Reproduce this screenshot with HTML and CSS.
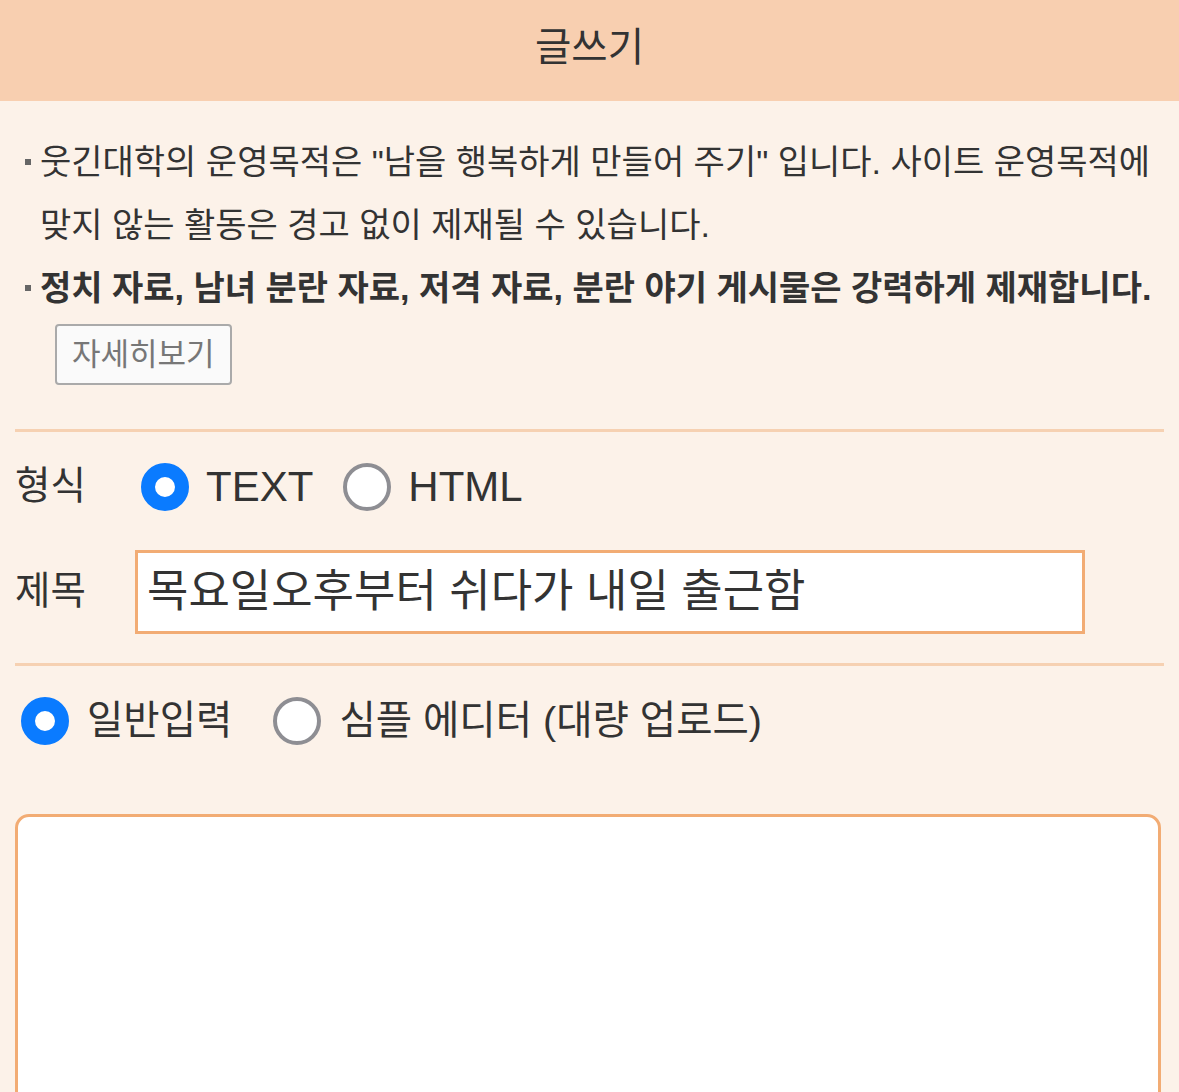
FILE: index.html
```html
<!DOCTYPE html>
<html lang="ko">
<head>
<meta charset="utf-8">
<title>글쓰기</title>
<link rel="stylesheet" href="styles.css">
</head>
<body>
<header class="top">
  <h1 class="top-title">글쓰기</h1>
</header>
<main class="wrap">
  <ul class="notice">
    <li class="notice-item">웃긴대학의 운영목적은 "남을 행복하게 만들어 주기" 입니다. 사이트 운영목적에 맞지 않는 활동은 경고 없이 제재될 수 있습니다.</li>
    <li class="notice-item notice-strong"><strong>정치 자료, 남녀 분란 자료, 저격 자료, 분란 야기 게시물은 강력하게 제재합니다.</strong> <button class="more-btn" type="button">자세히보기</button></li>
  </ul>
  <div class="sep sep-first"></div>
  <div class="row row-format">
    <span class="row-label">형식</span>
    <label class="opt opt-format"><span class="radio radio-on"></span><span class="opt-text latin">TEXT</span></label>
    <label class="opt opt-format"><span class="radio"></span><span class="opt-text latin">HTML</span></label>
  </div>
  <div class="row row-title">
    <span class="row-label">제목</span>
    <div class="title-input">목요일오후부터 쉬다가 내일 출근함</div>
  </div>
  <div class="sep sep-second"></div>
  <div class="row row-mode">
    <label class="opt opt-mode"><span class="radio radio-on"></span><span class="opt-text">일반입력</span></label>
    <label class="opt opt-mode"><span class="radio"></span><span class="opt-text">심플 에디터 (대량 업로드)</span></label>
  </div>
  <div class="editor"></div>
</main>
</body>
</html>
```
FILE: styles.css
```css
html, body {
  margin: 0;
  padding: 0;
}
body {
  background: #fcf2e9;
  color: #333333;
  font-family: "Liberation Sans", "Noto Sans CJK KR", sans-serif;
  overflow: hidden;
}
.top {
  background: #f8cfb0;
  height: 101px;
  display: flex;
  align-items: center;
  justify-content: center;
}
.top-title {
  margin: 0;
  font-size: 39.5px;
  font-weight: 400;
  color: #333;
  line-height: 1;
  padding-bottom: 6px;
}
.wrap {
  padding: 30px 15px 0 15px;
}
.notice {
  list-style: none;
  margin: 0;
  padding: 0;
}
.notice-item {
  position: relative;
  padding-left: 25px;
  font-size: 34px;
  line-height: 63px;
  word-break: keep-all;
}
.notice-item::before {
  content: "";
  position: absolute;
  left: 10px;
  top: 28px;
  width: 6px;
  height: 6px;
  background: #666;
}
.notice-strong strong {
  font-weight: 700;
}
.more-btn {
  display: inline-block;
  vertical-align: middle;
  margin-left: 15px;
  height: 61px;
  padding: 0 15px;
  border: 2px solid #aaaaaa;
  border-radius: 4px;
  background: #fafafa;
  color: #777777;
  font-family: "Liberation Sans", "Noto Sans CJK KR", sans-serif;
  font-size: 31px;
  line-height: 57px;
}
.sep {
  height: 3px;
  background: #f6d1b2;
}
.sep-first {
  margin-top: 44px;
}
.sep-second {
  margin-top: 29px;
}
.row {
  display: flex;
  align-items: center;
}
.row-format {
  margin-top: 25px;
  height: 60px;
}
.row-title {
  margin-top: 33px;
}
.row-label {
  width: 120px;
  flex: none;
  font-size: 38.5px;
  line-height: 1;
}
.opt {
  display: flex;
  align-items: center;
}
.opt-format {
  margin-left: 6px;
  margin-right: 24px;
}
.opt-format .opt-text {
  font-size: 42px;
  margin-left: 17px;
  line-height: 1;
}
.radio {
  width: 48px;
  height: 48px;
  border-radius: 50%;
  box-sizing: border-box;
  background: #ffffff;
  border: 4px solid #8e8e93;
  flex: none;
}
.radio-on {
  border: 14px solid #0a7bff;
}
.title-input {
  box-sizing: border-box;
  width: 950px;
  height: 84px;
  border: 3px solid #f2ac74;
  background: #ffffff;
  padding: 0 9px;
  font-size: 45px;
  line-height: 78px;
  white-space: nowrap;
  overflow: hidden;
}
.row-mode {
  margin-top: 31px;
  padding-left: 6px;
  height: 48px;
}
.opt-mode {
  margin-right: 41px;
}
.opt-mode .opt-text {
  margin-left: 18px;
  font-size: 39.5px;
  line-height: 1;
}
.editor {
  margin-top: 69px;
  width: 1146px;
  height: 420px;
  box-sizing: border-box;
  border: 3px solid #f2ac74;
  border-radius: 14px;
  background: #ffffff;
}
```
